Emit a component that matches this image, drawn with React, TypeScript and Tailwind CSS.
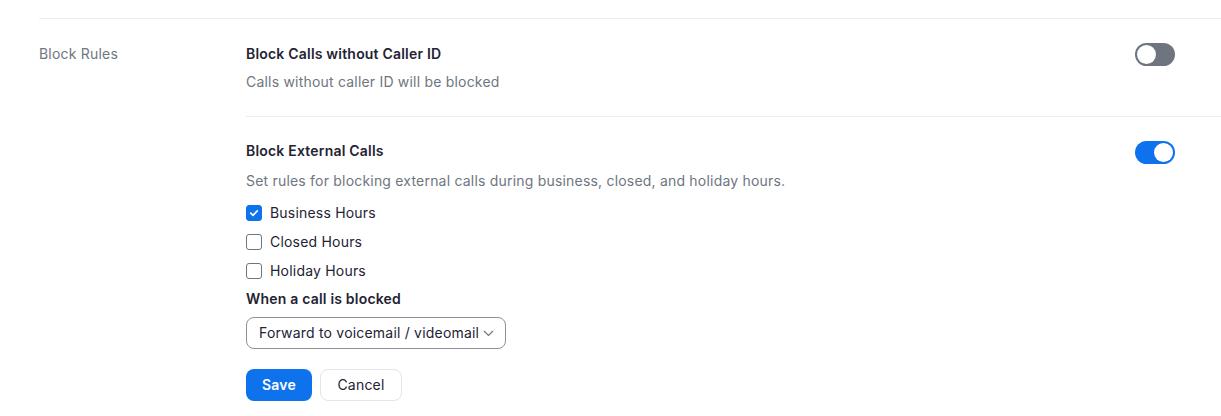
import { useState } from "react";

function Toggle({ on, onClick }: { on: boolean; onClick: () => void }) {
  return (
    <button
      onClick={onClick}
      className={`relative h-[23px] w-[40px] shrink-0 rounded-full ${on ? "bg-[#0e72ed]" : "bg-[#6e7480]"}`}
    >
      <span
        className={`absolute top-[2px] h-[19px] w-[19px] rounded-full bg-white ${on ? "left-[19px]" : "left-[2px]"}`}
      />
    </button>
  );
}

function Check({ checked, label, onClick }: { checked: boolean; label: string; onClick: () => void }) {
  return (
    <label className="flex h-5 cursor-pointer items-center gap-2" onClick={onClick}>
      <span
        className={`flex h-4 w-4 items-center justify-center rounded-[3px] border ${checked ? "border-[#0e72ed] bg-[#0e72ed]" : "border-[#6e7480] bg-white"}`}
      >
        {checked && (
          <svg width="10" height="10" viewBox="0 0 10 10" fill="none">
            <path d="M1.8 5.2 L4 7.3 L8.3 2.8" stroke="white" strokeWidth="1.7" strokeLinecap="round" strokeLinejoin="round" />
          </svg>
        )}
      </span>
      <span className="text-sm text-[#232333]">{label}</span>
    </label>
  );
}

export default function App() {
  const [noCallerId, setNoCallerId] = useState(false);
  const [external, setExternal] = useState(true);
  const [hours, setHours] = useState({ business: true, closed: false, holiday: false });

  return (
    <div className="min-h-screen bg-white pl-[39px] pt-[18px] font-['Inter',sans-serif] tracking-[0.2px]">
      <div className="flex border-t border-[#ededf0]">
        {/* label column */}
        <div className="w-[207px] shrink-0 pt-[25px] text-sm leading-5 text-[#6e7680]">Block Rules</div>

        {/* settings column */}
        <div className="flex-1">
          {/* Block Calls without Caller ID */}
          <div className="flex border-b border-[#ededf0] pb-[24px] pt-[24px] pr-[46px]">
            <div className="flex-1">
              <div className="pt-px text-sm font-semibold leading-5 text-[#232333]">Block Calls without Caller ID</div>
              <div className="mt-[8px] text-sm leading-5 text-[#6e7680]">Calls without caller ID will be blocked</div>
            </div>
            <Toggle on={noCallerId} onClick={() => setNoCallerId(!noCallerId)} />
          </div>

          {/* Block External Calls */}
          <div className="flex pt-[24px] pr-[46px]">
            <div className="flex-1">
              <div className="text-sm font-semibold leading-5 text-[#232333]">Block External Calls</div>
              <div className="mt-[10px] text-sm leading-5 text-[#6e7680]">
                Set rules for blocking external calls during business, closed, and holiday hours.
              </div>

              <div className="mt-[12px] flex flex-col gap-[9px]">
                <Check checked={hours.business} label="Business Hours" onClick={() => setHours({ ...hours, business: !hours.business })} />
                <Check checked={hours.closed} label="Closed Hours" onClick={() => setHours({ ...hours, closed: !hours.closed })} />
                <Check checked={hours.holiday} label="Holiday Hours" onClick={() => setHours({ ...hours, holiday: !hours.holiday })} />
              </div>

              <div className="mt-[8px] text-sm font-semibold leading-5 text-[#232333]">When a call is blocked</div>

              <button className="mt-[8px] flex h-[32px] w-[260px] items-center justify-between rounded-lg border border-[#909096] pl-3 pr-[11px] text-sm text-[#232333]">
                <span>Forward to voicemail / videomail</span>
                <svg width="11" height="7" viewBox="0 0 11 7" fill="none">
                  <path d="M1 1 L5.5 5.5 L10 1" stroke="#6e7680" strokeWidth="1.2" />
                </svg>
              </button>

              <div className="mt-[20px] flex gap-2">
                <button className="h-[32px] w-[66px] rounded-lg bg-[#0e72ed] text-sm font-semibold text-white">Save</button>
                <button className="h-[32px] w-[82px] rounded-lg border border-[#e4e4ea] bg-white text-sm text-[#232333]">Cancel</button>
              </div>
            </div>
            <Toggle on={external} onClick={() => setExternal(!external)} />
          </div>
        </div>
      </div>
    </div>
  );
}
